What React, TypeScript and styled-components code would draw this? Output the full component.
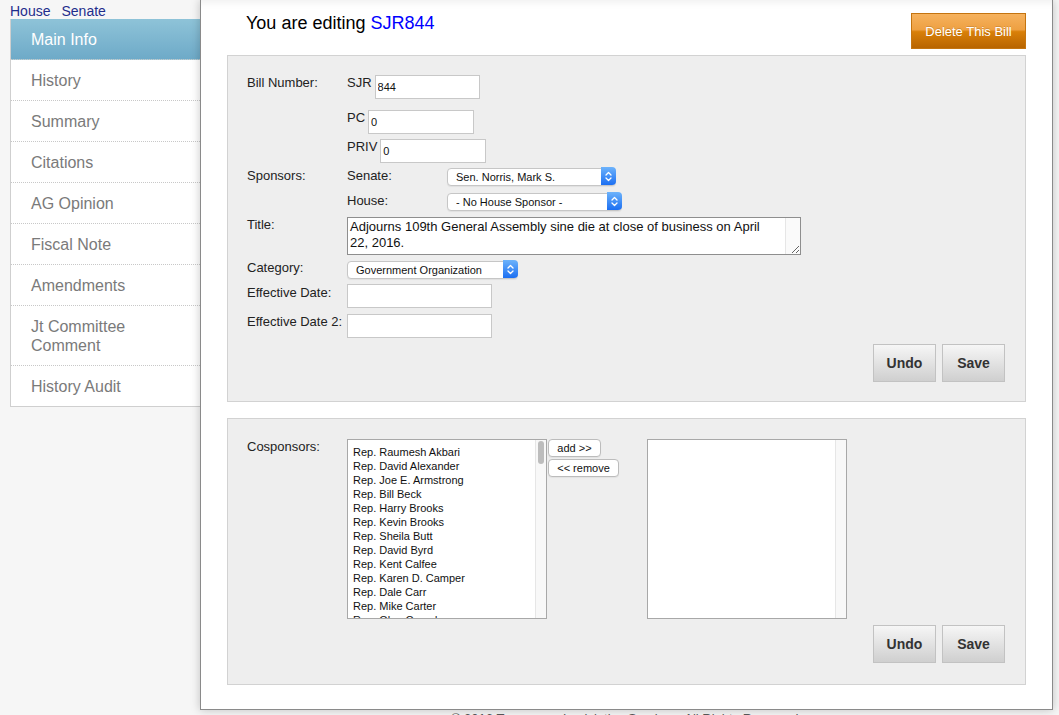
import React from 'react';
import styled, { createGlobalStyle } from 'styled-components';

const GlobalStyle = createGlobalStyle`
  html, body { margin: 0; padding: 0; }
  body {
    background: #f6f6f6;
    font-family: "Liberation Sans", Arial, Helvetica, sans-serif;
    overflow: hidden;
  }
  * { box-sizing: border-box; }
`;

const Page = styled.div`
  display: flex;
  align-items: flex-start;
  height: 715px;
`;

const Side = styled.aside`
  width: 200px;
  padding-left: 10px;
  flex-shrink: 0;
`;

const TopLinks = styled.div`
  display: flex;
  gap: 11px;
  font-size: 14px;
  line-height: 16px;
  padding-top: 3px;
`;

const TopLink = styled.a`
  color: #1f2d8c;
  text-decoration: none;
`;

const Nav = styled.nav`
  background: #fff;
  border-left: 1px solid #cfcfcf;
  border-bottom: 1px solid #cfcfcf;
  display: flex;
  flex-direction: column;
`;

const NavItem = styled.a<{ $active?: boolean }>`
  display: block;
  padding: 11px 20px 10px 20px;
  line-height: 19px;
  font-size: 16px;
  text-decoration: none;
  color: ${(p) => (p.$active ? '#fff' : '#7a7a7a')};
  background: ${(p) => (p.$active ? 'linear-gradient(#8ec3d8, #6eaac8)' : '#fff')};
  border-bottom: 1px dotted #c8c8c8;
  &:last-child { border-bottom: none; }
`;

const Main = styled.main`
  width: 853px;
  flex-shrink: 0;
  display: flex;
  flex-direction: column;
  align-items: center;
`;

const Panel = styled.div`
  width: 100%;
  background: #fff;
  border: 1px solid #8a8a8a;
  border-top: none;
  box-shadow: 0 0 9px rgba(0, 0, 0, 0.22), inset 0 10px 8px -8px rgba(0, 0, 0, 0.07);
  padding: 13px 26px 24px 26px;
  display: flex;
  flex-direction: column;
`;

const Header = styled.div`
  display: flex;
  justify-content: space-between;
  align-items: flex-start;
  height: 36px;
  margin-bottom: 6px;
`;

const Title = styled.h1`
  margin: 0;
  padding: 1px 0 0 19px;
  font-size: 18px;
  line-height: 18px;
  font-weight: normal;
  color: #000;
`;

const BillId = styled.span`
  color: #0000ff;
`;

const DeleteButton = styled.button`
  width: 115px;
  height: 36px;
  border: 1px solid #c47410;
  background: linear-gradient(#f6b25e 0%, #eea042 46%, #d98009 52%, #b86400 100%);
  color: #fff;
  font-family: "Liberation Sans", Arial, sans-serif;
  font-size: 13px;
  text-shadow: 0 -1px 0 rgba(0, 0, 0, 0.15);
  padding: 0;
`;

const Box = styled.section<{ $pt: number; $pb: number; $mt?: number }>`
  background: #eeeeee;
  border: 1px solid #d2d2d2;
  padding: ${(p) => p.$pt}px 20px ${(p) => p.$pb}px 19px;
  margin-top: ${(p) => p.$mt ?? 0}px;
  display: flex;
  flex-direction: column;
`;

const Row = styled.div<{ $mt?: number }>`
  display: flex;
  align-items: flex-start;
  margin-top: ${(p) => p.$mt ?? 0}px;
`;

const Label = styled.div<{ $pt?: number }>`
  width: 100px;
  flex-shrink: 0;
  font-size: 13px;
  line-height: 16px;
  color: #222;
  padding-top: ${(p) => p.$pt ?? 0}px;
`;

const Prefix = styled.span`
  font-size: 13px;
  line-height: 16px;
  color: #222;
  margin-right: 3px;
`;

const TextInput = styled.input<{ $w: number }>`
  width: ${(p) => p.$w}px;
  height: 24px;
  border: 1px solid #c8c8c8;
  background: #fff;
  padding: 0 2px;
  font-family: "Liberation Sans", Arial, sans-serif;
  font-size: 11px;
  color: #111;
  outline: none;
`;

const SelectWrap = styled.div<{ $w: number }>`
  position: relative;
  width: ${(p) => p.$w}px;
  height: 18px;
`;

const NativeSelect = styled.select`
  appearance: none;
  -webkit-appearance: none;
  width: 100%;
  height: 100%;
  border: 1px solid #c6c6c6;
  border-radius: 4px;
  background: #fff;
  font-family: "Liberation Sans", Arial, sans-serif;
  font-size: 11px;
  color: #111;
  padding: 0 18px 0 8px;
  box-shadow: 0 1px 1px rgba(0, 0, 0, 0.06);
  outline: none;
`;

const Caret = styled.span`
  position: absolute;
  top: 0;
  right: 0;
  width: 15px;
  height: 18px;
  border-radius: 0 4px 4px 0;
  background: linear-gradient(#6db3fb, #1c6ff2);
  display: flex;
  align-items: center;
  justify-content: center;
  pointer-events: none;
`;

const TitleArea = styled.textarea`
  width: 454px;
  height: 38px;
  border: 1px solid #8e8e8e;
  background: linear-gradient(
    to right,
    #fff calc(100% - 15px),
    #e6e6e6 calc(100% - 15px),
    #e6e6e6 calc(100% - 14px),
    #fafafa calc(100% - 14px)
  );
  padding: 1px 24px 1px 2px;
  font-family: "Liberation Sans", Arial, sans-serif;
  font-size: 13px;
  line-height: 16px;
  color: #111;
  overflow: hidden;
  outline: none;
`;

const ButtonBar = styled.div<{ $mt: number }>`
  display: flex;
  justify-content: flex-end;
  gap: 6px;
  margin-top: ${(p) => p.$mt}px;
`;

const GrayButton = styled.button`
  width: 63px;
  height: 38px;
  border: 1px solid #c2c2c2;
  background: linear-gradient(#f6f6f6, #cfcfcf);
  color: #333;
  font-family: "Liberation Sans", Arial, sans-serif;
  font-size: 14px;
  font-weight: bold;
  padding: 0;
`;

const ListBox = styled.div`
  width: 200px;
  height: 180px;
  border: 1px solid #a8a8a8;
  background: #fff;
  display: flex;
  overflow: hidden;
  flex-shrink: 0;
`;

const ListItems = styled.ul`
  flex: 1;
  margin: 0;
  padding: 5px 0 0 5px;
  list-style: none;
  overflow: hidden;
  font-size: 11px;
  line-height: 14px;
  color: #111;
  white-space: nowrap;
`;

const ScrollTrack = styled.div`
  width: 11px;
  flex-shrink: 0;
  background: #f8f8f8;
  border-left: 1px solid #e6e6e6;
  padding-top: 1px;
  display: flex;
  justify-content: center;
`;

const ScrollThumb = styled.div`
  width: 6px;
  height: 23px;
  border-radius: 3px;
  background: #bdbdbd;
`;

const MoveButtons = styled.div`
  width: 100px;
  padding-left: 1px;
  display: flex;
  flex-direction: column;
  align-items: flex-start;
  gap: 2px;
`;

const SmallButton = styled.button<{ $w: number }>`
  width: ${(p) => p.$w}px;
  height: 18px;
  border: 1px solid #bcbcbc;
  border-radius: 4px;
  background: #fff;
  font-family: "Liberation Sans", Arial, sans-serif;
  font-size: 11px;
  color: #111;
  padding: 0;
  box-shadow: 0 1px 1px rgba(0, 0, 0, 0.05);
`;

const Footer = styled.div`
  margin-top: 2px;
  font-size: 13px;
  line-height: 14px;
  color: #555;
  text-align: center;
  white-space: nowrap;
`;

const Chevrons = () => (
  <svg width="7" height="11" viewBox="0 0 7 11" fill="none">
    <path d="M1 4 L3.5 1.5 L6 4" stroke="#fff" strokeWidth="1.3" strokeLinecap="round" strokeLinejoin="round" />
    <path d="M1 7 L3.5 9.5 L6 7" stroke="#fff" strokeWidth="1.3" strokeLinecap="round" strokeLinejoin="round" />
  </svg>
);

const Select = ({ w, value }: { w: number; value: string }) => (
  <SelectWrap $w={w}>
    <NativeSelect defaultValue={value}>
      <option value={value}>{value}</option>
    </NativeSelect>
    <Caret>
      <Chevrons />
    </Caret>
  </SelectWrap>
);

const navItems = [
  'Main Info',
  'History',
  'Summary',
  'Citations',
  'AG Opinion',
  'Fiscal Note',
  'Amendments',
  'Jt Committee Comment',
  'History Audit',
];

const reps = [
  'Raumesh Akbari',
  'David Alexander',
  'Joe E. Armstrong',
  'Bill Beck',
  'Harry Brooks',
  'Kevin Brooks',
  'Sheila Butt',
  'David Byrd',
  'Kent Calfee',
  'Karen D. Camper',
  'Dale Carr',
  'Mike Carter',
  'Glen Casada',
  'John Ray Clemmons',
  'Jim Coley',
];

export default function App() {
  return (
    <>
      <GlobalStyle />
      <Page>
        <Side>
          <TopLinks>
            <TopLink href="#">House</TopLink>
            <TopLink href="#">Senate</TopLink>
          </TopLinks>
          <Nav>
            {navItems.map((item, i) => (
              <NavItem key={item} href="#" $active={i === 0}>
                {item}
              </NavItem>
            ))}
          </Nav>
        </Side>
        <Main>
          <Panel>
            <Header>
              <Title>
                You are editing <BillId>SJR844</BillId>
              </Title>
              <DeleteButton>Delete This Bill</DeleteButton>
            </Header>

            <Box $pt={19} $pb={19}>
              <Row>
                <Label>Bill Number:</Label>
                <Prefix>SJR</Prefix>
                <TextInput $w={105} defaultValue="844" />
              </Row>
              <Row $mt={11}>
                <Label />
                <Prefix>PC</Prefix>
                <TextInput $w={106} defaultValue="0" />
              </Row>
              <Row $mt={5}>
                <Label />
                <Prefix>PRIV</Prefix>
                <TextInput $w={106} defaultValue="0" />
              </Row>
              <Row $mt={4}>
                <Label $pt={1}>Sponsors:</Label>
                <Label $pt={1}>Senate:</Label>
                <Select w={169} value="Sen. Norris, Mark S." />
              </Row>
              <Row $mt={7}>
                <Label />
                <Label $pt={1}>House:</Label>
                <Select w={175} value="- No House Sponsor -" />
              </Row>
              <Row $mt={7}>
                <Label>Title:</Label>
                <TitleArea defaultValue="Adjourns 109th General Assembly sine die at close of business on April 22, 2016." />
              </Row>
              <Row $mt={5}>
                <Label>Category:</Label>
                <Select w={171} value="Government Organization" />
              </Row>
              <Row $mt={6}>
                <Label $pt={1}>Effective Date:</Label>
                <TextInput $w={145} />
              </Row>
              <Row $mt={6}>
                <Label>Effective Date 2:</Label>
                <TextInput $w={145} />
              </Row>
              <ButtonBar $mt={6}>
                <GrayButton>Undo</GrayButton>
                <GrayButton>Save</GrayButton>
              </ButtonBar>
            </Box>

            <Box $pt={20} $pb={21} $mt={16}>
              <Row>
                <Label>Cosponsors:</Label>
                <ListBox>
                  <ListItems>
                    {reps.map((r) => (
                      <li key={r}>Rep. {r}</li>
                    ))}
                  </ListItems>
                  <ScrollTrack>
                    <ScrollThumb />
                  </ScrollTrack>
                </ListBox>
                <MoveButtons>
                  <SmallButton $w={53}>add &gt;&gt;</SmallButton>
                  <SmallButton $w={71}>&lt;&lt; remove</SmallButton>
                </MoveButtons>
                <ListBox>
                  <ListItems />
                  <ScrollTrack />
                </ListBox>
              </Row>
              <ButtonBar $mt={6}>
                <GrayButton>Undo</GrayButton>
                <GrayButton>Save</GrayButton>
              </ButtonBar>
            </Box>
          </Panel>
          <Footer>© 2016 Tennessee Legislative Services. All Rights Reserved.</Footer>
        </Main>
      </Page>
    </>
  );
}
